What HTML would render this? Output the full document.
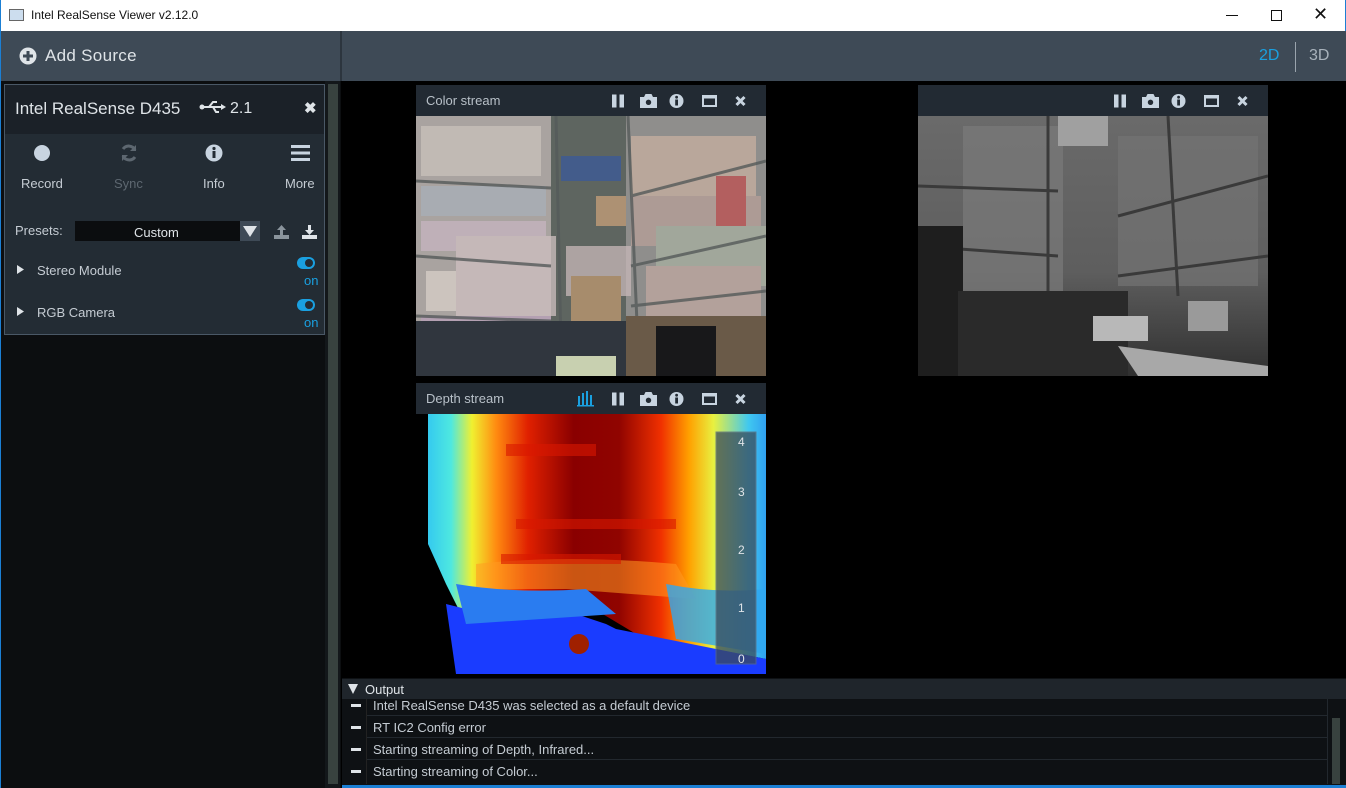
<!DOCTYPE html>
<html><head><meta charset="utf-8"><style>
*{margin:0;padding:0;box-sizing:border-box}
body{width:1346px;height:788px;position:relative;overflow:hidden;background:#000;font-family:"Liberation Sans",sans-serif;}
.a{position:absolute}
.hdr{background:#222a33;height:31px}
.hdr span{position:absolute;left:10px;top:8px;font-size:13px;color:#b8c0c8}
</style></head><body>
<div class="a" style="left:0;top:0;width:1346px;height:31px;background:#fff;border-left:1px solid #1b7fd4;border-right:1px solid #1b7fd4"></div>
<div class="a" style="left:9px;top:9px;width:15px;height:12px;border:1px solid #666;background:#cde"></div>
<div class="a" style="left:31px;top:8px;font-size:12px;color:#111">Intel RealSense Viewer v2.12.0</div>
<div class="a" style="left:1226px;top:15px;width:12px;height:1px;background:#111"></div>
<div class="a" style="left:1271px;top:10px;width:11px;height:11px;border:1px solid #111"></div>
<div class="a" style="left:1313px;top:4px;font-size:18px;color:#111">✕</div>
<div class="a" style="left:0;top:31px;width:1346px;height:50px;background:#3e4a56;border-left:1px solid #1b7fd4"></div>
<div class="a" style="left:340px;top:31px;width:2px;height:50px;background:#2c353e"></div>
<svg class="a" style="left:19px;top:47px" width="18" height="18"><circle cx="9" cy="9" r="8.5" fill="#dfe4e8"/><rect x="4" y="7.5" width="10" height="3" fill="#3e4a56"/><rect x="7.5" y="4" width="3" height="10" fill="#3e4a56"/></svg>
<div class="a" style="left:45px;top:46px;font-size:17px;color:#dfe4e8;letter-spacing:.3px">Add Source</div>
<div class="a" style="left:1259px;top:47px;font-size:16px;color:#1aa0e0">2D</div>
<div class="a" style="left:1295px;top:42px;width:1px;height:30px;background:#9aa4ad"></div>
<div class="a" style="left:1309px;top:47px;font-size:16px;color:#a8b2bb">3D</div>
<div class="a" style="left:0;top:81px;width:341px;height:707px;background:#0c0e10;border-left:1px solid #1b7fd4"></div>
<div class="a" style="left:325px;top:81px;width:15px;height:707px;background:#13171a"></div>
<div class="a" style="left:328px;top:84px;width:10px;height:700px;background:#38423f"></div>
<div class="a" style="left:4px;top:84px;width:321px;height:251px;background:#232c34;border:1px solid #4a5866"></div>
<div class="a" style="left:5px;top:85px;width:319px;height:49px;background:#1b2128"></div>
<div class="a" style="left:15px;top:99px;font-size:17px;color:#dfe4e8">Intel RealSense D435</div>
<svg class="a" style="left:199px;top:99px" width="28" height="16"><path d="M2 8H22M10 8L14 3H18M14 8L17 13H20" stroke="#dfe4e8" stroke-width="2" fill="none"/><circle cx="3" cy="8" r="2.5" fill="#dfe4e8"/><path d="M22 5L27 8L22 11Z" fill="#dfe4e8"/></svg>
<div class="a" style="left:230px;top:100px;font-size:16px;color:#dfe4e8">2.1</div>
<div class="a" style="left:304px;top:99px;font-size:15px;color:#dfe4e8;font-weight:bold">✖</div>
<svg class="a" style="left:33px;top:144px" width="18" height="18"><circle cx="9" cy="9" r="8" fill="#c8d4e0"/></svg>
<svg class="a" style="left:119px;top:143px" width="20" height="20"><path d="M16 7A7 7 0 0 0 4 6M4 13A7 7 0 0 0 16 14" stroke="#5d6770" stroke-width="3" fill="none"/><path d="M17 2V8H11Z M3 18V12H9Z" fill="#5d6770"/></svg>
<svg class="a" style="left:205px;top:144px" width="18" height="18"><circle cx="9" cy="9" r="8.5" fill="#c8d4e0"/><rect x="7.5" y="7" width="3" height="7" fill="#232c34"/><circle cx="9" cy="4.5" r="1.6" fill="#232c34"/></svg>
<svg class="a" style="left:291px;top:145px" width="19" height="16"><rect y="0" width="19" height="3" fill="#c8d4e0"/><rect y="6.5" width="19" height="3" fill="#c8d4e0"/><rect y="13" width="19" height="3" fill="#c8d4e0"/></svg>
<div class="a" style="left:21px;top:176px;font-size:13px;color:#c5ccd3">Record</div>
<div class="a" style="left:114px;top:176px;font-size:13px;color:#5d6770">Sync</div>
<div class="a" style="left:203px;top:176px;font-size:13px;color:#c5ccd3">Info</div>
<div class="a" style="left:285px;top:176px;font-size:13px;color:#c5ccd3">More</div>
<div class="a" style="left:15px;top:223px;font-size:13px;color:#c5ccd3">Presets:</div>
<div class="a" style="left:75px;top:221px;width:165px;height:20px;background:#0b0d0f"></div>
<div class="a" style="left:134px;top:225px;font-size:13px;color:#dfe4e8">Custom</div>
<div class="a" style="left:240px;top:221px;width:20px;height:20px;background:#3e4a56"></div>
<svg class="a" style="left:243px;top:226px" width="14" height="11"><path d="M0 0H14L7 11Z" fill="#dfe4e8"/></svg>
<svg class="a" style="left:274px;top:224px" width="15" height="15"><path d="M7.5 1L12 6H9V11H6V6H3Z" fill="#8a949c"/><rect y="11" width="15" height="4" fill="#8a949c"/></svg>
<svg class="a" style="left:302px;top:224px" width="15" height="15"><path d="M7.5 11L12 6H9V1H6V6H3Z" fill="#dfe4e8"/><rect y="11" width="15" height="4" fill="#dfe4e8"/></svg>
<svg class="a" style="left:17px;top:265px" width="7" height="9"><path d="M0 0L7 4.5L0 9Z" fill="#dfe4e8"/></svg>
<div class="a" style="left:37px;top:263px;font-size:13px;color:#c5ccd3">Stereo Module</div>
<svg class="a" style="left:297px;top:257px" width="18" height="12"><rect width="18" height="12" rx="6" fill="#1aa0e0"/><circle cx="12" cy="6" r="4" fill="#232c34"/></svg>
<div class="a" style="left:304px;top:273px;font-size:13px;color:#1aa0e0">on</div>
<svg class="a" style="left:17px;top:307px" width="7" height="9"><path d="M0 0L7 4.5L0 9Z" fill="#dfe4e8"/></svg>
<div class="a" style="left:37px;top:305px;font-size:13px;color:#c5ccd3">RGB Camera</div>
<svg class="a" style="left:297px;top:299px" width="18" height="12"><rect width="18" height="12" rx="6" fill="#1aa0e0"/><circle cx="12" cy="6" r="4" fill="#232c34"/></svg>
<div class="a" style="left:304px;top:315px;font-size:13px;color:#1aa0e0">on</div>

<div class="a hdr" style="left:416px;top:85px;width:350px"><span>Color stream</span></div>
<div class="a hdr" style="left:416px;top:383px;width:350px"><span>Depth stream</span></div>
<div class="a hdr" style="left:918px;top:85px;width:350px"></div>
<svg class="a" style="left:0;top:0" width="1346" height="788">
<defs>
<g id="icons">
<rect x="0" y="-6.5" width="4.5" height="13" fill="#c8d4e0"/><rect x="7.5" y="-6.5" width="4.5" height="13" fill="#c8d4e0"/>
<path d="M28 -4H32L33.5 -7H39.5L41 -4H45V7H28Z" fill="#c8d4e0"/><circle cx="36.5" cy="1.3" r="2.7" fill="#222a33"/>
<circle cx="64.5" cy="0" r="7" fill="#c8d4e0"/><rect x="63.2" y="-1.5" width="2.8" height="6" fill="#222a33"/><circle cx="64.6" cy="-3.8" r="1.4" fill="#222a33"/>
<rect x="90" y="-6" width="15" height="12" fill="#c8d4e0"/><rect x="92" y="-2.5" width="11" height="6.5" fill="#222a33"/>
<path d="M124.5 -4L132.5 4M132.5 -4L124.5 4" stroke="#c8d4e0" stroke-width="3"/>
</g>
</defs>
<use href="#icons" x="612" y="101"/>
<use href="#icons" x="612" y="399"/>
<use href="#icons" x="1114" y="101"/>
<g fill="#1aa0e0"><rect x="578" y="396" width="2" height="9"/><rect x="582" y="393" width="2" height="12"/><rect x="586" y="391" width="2" height="14"/><rect x="590" y="395" width="2" height="10"/><rect x="577" y="405" width="17" height="1.5"/></g>
</svg>

<svg class="a" style="left:416px;top:116px" width="350" height="260">
<rect width="350" height="260" fill="#6e7270"/>
<rect x="0" y="0" width="135" height="250" fill="#a9a3a0"/>
<rect x="135" y="0" width="75" height="230" fill="#5e6560"/>
<rect x="210" y="0" width="140" height="230" fill="#8f8e8c"/>
<g opacity=".75">
<rect x="5" y="10" width="120" height="50" fill="#c9c2bb"/><rect x="5" y="70" width="125" height="30" fill="#a8b0b8"/>
<rect x="5" y="105" width="125" height="30" fill="#c7b5c0"/><rect x="10" y="155" width="40" height="40" fill="#d8d0c8"/><rect x="40" y="120" width="100" height="80" fill="#cfc0c0"/>
<rect x="5" y="200" width="130" height="50" fill="#b89fb8"/>
<rect x="145" y="40" width="60" height="25" fill="#3a5a9a"/><rect x="180" y="80" width="30" height="30" fill="#c8a07a"/>
<rect x="150" y="130" width="65" height="50" fill="#c8b8b8"/><rect x="155" y="160" width="50" height="60" fill="#c09a70"/>
<rect x="215" y="20" width="125" height="60" fill="#c8b0a0"/><rect x="215" y="80" width="130" height="50" fill="#b8a098"/>
<rect x="240" y="110" width="110" height="60" fill="#a8b0a0"/><rect x="230" y="150" width="115" height="70" fill="#c0a8a0"/>
<rect x="300" y="60" width="30" height="50" fill="#c05050"/>
</g>
<g stroke="#555a5a" stroke-width="3" opacity=".8"><line x1="0" y1="65" x2="135" y2="72"/><line x1="0" y1="140" x2="135" y2="150"/><line x1="0" y1="200" x2="135" y2="205"/><line x1="215" y1="80" x2="350" y2="45"/><line x1="215" y1="150" x2="350" y2="120"/><line x1="215" y1="190" x2="350" y2="175"/><line x1="140" y1="0" x2="145" y2="230"/><line x1="212" y1="0" x2="222" y2="230"/></g>
<rect x="0" y="205" width="215" height="55" fill="#30363e"/>
<rect x="210" y="200" width="140" height="60" fill="#6a5a48"/>
<rect x="240" y="210" width="60" height="50" fill="#18181a"/>
<rect x="140" y="240" width="60" height="20" fill="#c8d0b0"/>
</svg>
<svg class="a" style="left:918px;top:116px" width="350" height="260">
<defs><linearGradient id="g1" x1="0" y1="0" x2="0" y2="1"><stop offset="0" stop-color="#6a6a6a"/><stop offset=".6" stop-color="#5e5e5e"/><stop offset="1" stop-color="#303030"/></linearGradient></defs>
<rect width="350" height="260" fill="url(#g1)"/>
<rect x="45" y="10" width="100" height="170" fill="#7a7a7a" opacity=".7"/>
<rect x="200" y="20" width="140" height="150" fill="#747474" opacity=".7"/>
<g stroke="#3a3a3a" stroke-width="3"><line x1="0" y1="70" x2="140" y2="75"/><line x1="0" y1="130" x2="140" y2="140"/><line x1="200" y1="100" x2="350" y2="60"/><line x1="200" y1="160" x2="350" y2="140"/><line x1="130" y1="0" x2="130" y2="180"/><line x1="250" y1="0" x2="260" y2="180"/></g>
<rect x="140" y="0" width="50" height="30" fill="#a0a0a0"/>
<rect x="0" y="110" width="45" height="150" fill="#1e1e1e"/>
<rect x="40" y="175" width="170" height="85" fill="#2a2a2a"/>
<path d="M200 230L350 250V260H220Z" fill="#a8a8a8"/>
<rect x="175" y="200" width="55" height="25" fill="#b8b8b8"/>
<rect x="270" y="185" width="40" height="30" fill="#9a9a9a"/>
</svg>
<svg class="a" style="left:416px;top:414px" width="350" height="261">
<defs>
<linearGradient id="dg" x1="0" y1="0" x2="1" y2="0">
<stop offset="0" stop-color="#000"/><stop offset=".03" stop-color="#33c8f0"/><stop offset=".1" stop-color="#4ee8e0"/><stop offset=".16" stop-color="#f0f030"/><stop offset=".23" stop-color="#ff8a10"/><stop offset=".32" stop-color="#e02000"/><stop offset=".45" stop-color="#8a0000"/><stop offset=".58" stop-color="#900400"/><stop offset=".7" stop-color="#f03000"/><stop offset=".78" stop-color="#ffa000"/><stop offset=".85" stop-color="#e8f040"/><stop offset=".95" stop-color="#40c8f0"/><stop offset="1" stop-color="#30a0f0"/></linearGradient>
</defs>
<rect width="350" height="261" fill="url(#dg)"/>
<path d="M60 150Q150 140 260 150L280 185L150 175L60 175Z" fill="#ff9a20" opacity=".55"/>
<g fill="#d81800" opacity=".6"><rect x="90" y="30" width="90" height="12"/><rect x="100" y="105" width="160" height="10"/><rect x="85" y="140" width="120" height="10"/></g>
<path d="M0 0H12V130L30 170L50 210L170 190L220 220L350 245V261H0Z" fill="#000"/>
<path d="M30 190L40 260H350V245L200 215L190 210L160 200L140 193L50 195Z" fill="#1a3cff"/>
<path d="M40 170Q100 180 170 175L200 200L50 210Z" fill="#2a7cf0"/>
<path d="M250 170Q300 180 350 175V240L260 225Z" fill="#30a8f0" opacity=".8"/>
<circle cx="163" cy="230" r="10" fill="#a02000"/>
<rect x="300" y="18" width="40" height="232" fill="#3a4a5a" opacity=".75" stroke="#5a6a7a"/>
<g font-size="12" fill="#dfe4e8"><text x="322" y="32">4</text><text x="322" y="82">3</text><text x="322" y="140">2</text><text x="322" y="198">1</text><text x="322" y="249">0</text></g>
</svg>
<div class="a" style="left:342px;top:678px;width:1004px;height:110px;background:#0e1114"></div>
<div class="a" style="left:342px;top:679px;width:1004px;height:20px;background:#1f252b"></div>
<svg class="a" style="left:348px;top:684px" width="10" height="10"><path d="M0 0H10L5 10Z" fill="#dfe4e8"/></svg>
<div class="a" style="left:365px;top:682px;font-size:13px;color:#dfe4e8">Output</div>
<div class="a" style="left:1332px;top:718px;width:8px;height:66px;background:#38423f"></div>
<div class="a" style="left:366px;top:699px;width:961px;height:85px;border-left:1px solid #222;background:linear-gradient(#0e1114 0,#0e1114 16px,#22282e 16px,#22282e 17px,#0e1114 17px,#0e1114 38px,#22282e 38px,#22282e 39px,#0e1114 39px,#0e1114 60px,#22282e 60px,#22282e 61px,#0e1114 61px)"></div>
<div class="a" style="left:1327px;top:699px;width:1px;height:85px;background:#22282e"></div>
<div class="a" style="left:342px;top:785px;width:1004px;height:3px;background:#1b7fd4"></div>
<div class="a" style="left:351px;top:704px;width:10px;height:3px;background:#dfe4e8"></div>
<div class="a" style="left:351px;top:726px;width:10px;height:3px;background:#dfe4e8"></div>
<div class="a" style="left:351px;top:748px;width:10px;height:3px;background:#dfe4e8"></div>
<div class="a" style="left:351px;top:770px;width:10px;height:3px;background:#dfe4e8"></div>
<div class="a" style="left:373px;top:698px;font-size:13px;color:#c5ccd3">Intel RealSense D435 was selected as a default device</div>
<div class="a" style="left:373px;top:720px;font-size:13px;color:#c5ccd3">RT IC2 Config error</div>
<div class="a" style="left:373px;top:742px;font-size:13px;color:#c5ccd3">Starting streaming of Depth, Infrared...</div>
<div class="a" style="left:373px;top:764px;font-size:13px;color:#c5ccd3">Starting streaming of Color...</div>
</body></html>
